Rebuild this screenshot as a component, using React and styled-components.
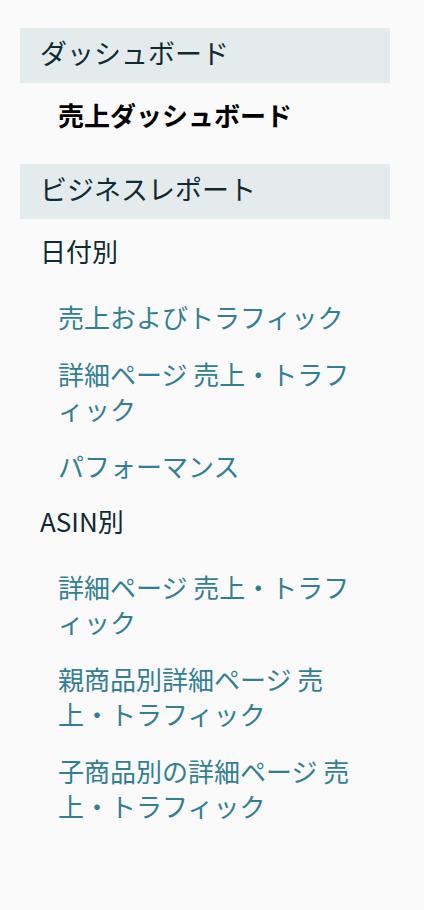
import React from 'react';
import styled, { createGlobalStyle } from 'styled-components';

const GlobalStyle = createGlobalStyle`
  html, body {
    margin: 0;
    padding: 0;
    background: #fafafa;
  }
  body {
    font-family: "Noto Sans CJK JP", "Noto Sans", sans-serif;
  }
`;

const sections = [
  {
    title: 'ダッシュボード',
    groups: [{ links: [{ label: '売上ダッシュボード', active: true }] }],
  },
  {
    title: 'ビジネスレポート',
    groups: [
      {
        label: '日付別',
        links: [
          { label: '売上およびトラフィック' },
          { label: '詳細ページ 売上・トラフィック' },
          { label: 'パフォーマンス' },
        ],
      },
      {
        label: 'ASIN別',
        links: [
          { label: '詳細ページ 売上・トラフィック' },
          { label: '親商品別詳細ページ 売上・トラフィック' },
          { label: '子商品別の詳細ページ 売上・トラフィック' },
        ],
      },
    ],
  },
];

const Sidebar = styled.nav`
  width: 370px;
  padding: 28px 0 40px 20px;
`;

const SectionTitle = styled.div`
  height: 49px;
  line-height: 49px;
  padding: 0 20px 6px;
  background: #e3ebed;
  color: #0f2a33;
  font-size: 27px;
`;

const SectionBody = styled.div`
  padding: 14px 0 32px;
  display: flex;
  flex-direction: column;
`;

const GroupLabel = styled.div`
  padding-left: 20px;
  line-height: 35px;
  font-size: 26px;
  color: #0f2a33;
`;

const LinkList = styled.ul`
  list-style: none;
  margin: ${(p) => (p.$labelled ? '31px 0 20px' : '0')};
  padding: 0 28px 0 38px;
  display: flex;
  flex-direction: column;
  gap: 22px;
`;

const NavLink = styled.li`
  font-size: 26px;
  line-height: 35px;
  color: ${(p) => (p.$active ? '#000000' : '#337f92')};
  font-weight: ${(p) => (p.$active ? 700 : 400)};
  cursor: pointer;
`;

export default function App() {
  return (
    <>
      <GlobalStyle />
      <Sidebar>
        {sections.map((section) => (
          <section key={section.title}>
            <SectionTitle>{section.title}</SectionTitle>
            <SectionBody>
              {section.groups.map((group, i) => (
                <React.Fragment key={i}>
                  {group.label && <GroupLabel>{group.label}</GroupLabel>}
                  <LinkList $labelled={!!group.label}>
                    {group.links.map((link, j) => (
                      <NavLink key={j} $active={link.active}>
                        {link.label}
                      </NavLink>
                    ))}
                  </LinkList>
                </React.Fragment>
              ))}
            </SectionBody>
          </section>
        ))}
      </Sidebar>
    </>
  );
}
